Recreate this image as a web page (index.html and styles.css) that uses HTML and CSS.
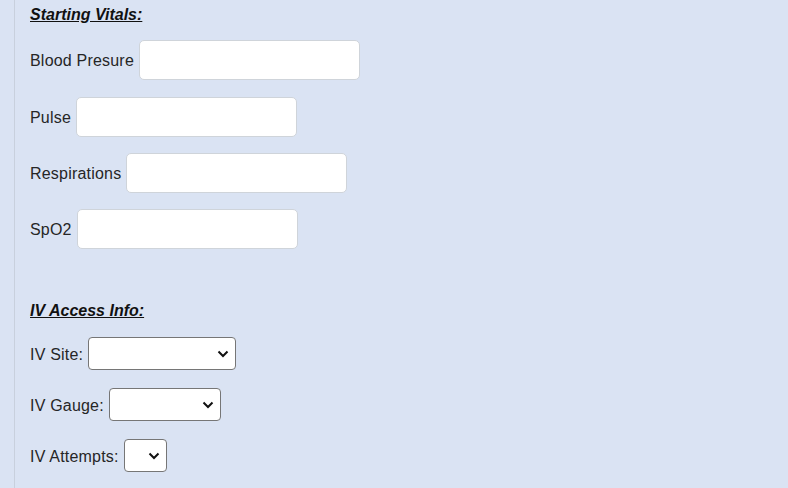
FILE: index.html
```html
<!DOCTYPE html>
<html>
    <head>
        <meta charset="UTF-8">
        <title>Run Sheet</title>
        <link rel="stylesheet" href="styles.css">
    </head>
    <body>
        <div class="sheet">
            <h3 class="sectionHead">Starting Vitals:</h3>
            <div class="vitals">
                <div class="fieldRow">
                    <label for="bp">Blood Presure</label>
                    <input id="bp" type="text">
                </div>
                <div class="fieldRow">
                    <label for="pulse">Pulse</label>
                    <input id="pulse" type="text">
                </div>
                <div class="fieldRow">
                    <label for="resp">Respirations</label>
                    <input id="resp" type="text">
                </div>
                <div class="fieldRow">
                    <label for="spo2">SpO2</label>
                    <input id="spo2" type="text">
                </div>
            </div>

            <h3 class="sectionHead ivHead">IV Access Info:</h3>
            <div class="ivInfo">
                <div class="pickRow">
                    <label for="ivSite">IV Site:</label>
                    <span class="pick">
                        <select id="ivSite" class="site"><option></option></select>
                        <svg class="chev" viewBox="0 0 12 8"><path d="M1.5 1.5 6 6 10.5 1.5"/></svg>
                    </span>
                </div>
                <div class="pickRow">
                    <label for="ivGauge">IV Gauge:</label>
                    <span class="pick">
                        <select id="ivGauge" class="gauge"><option></option></select>
                        <svg class="chev" viewBox="0 0 12 8"><path d="M1.5 1.5 6 6 10.5 1.5"/></svg>
                    </span>
                </div>
                <div class="pickRow">
                    <label for="ivTries">IV Attempts:</label>
                    <span class="pick">
                        <select id="ivTries" class="tries"><option></option></select>
                        <svg class="chev" viewBox="0 0 12 8"><path d="M1.5 1.5 6 6 10.5 1.5"/></svg>
                    </span>
                </div>
            </div>
        </div>
    </body>
</html>
```

FILE: styles.css
```css
* {
    box-sizing: border-box; }

html, body {
    background: #dae3f3;
    color: #262626;
    margin: 0; padding: 0;
    height: 100%;
    font-family: 'Liberation Sans', Arial, sans-serif;
    font-size: 16px; }

.sheet {
    margin-left: 14px;
    padding-left: 15px;
    border-left: 1px solid #c8d0dd;
    min-height: 100%;
    overflow: hidden; }

.sectionHead {
    margin: 6px 0 0 0;
    font-size: 16px;
    font-weight: bold;
    font-style: italic;
    text-decoration: underline;
    color: #111; }
.ivHead { margin-top: 53px; }

.vitals { padding-top: 16px; }
.ivInfo { padding-top: 17px; }

label {
    letter-spacing: 0.2px;
    padding-top: 2px; }

.fieldRow, .pickRow {
    display: flex;
    align-items: center;
    gap: 5px; }
.fieldRow { height: 40px; margin-bottom: 16px; }
.fieldRow:first-child { margin-bottom: 17px; }
.pickRow { height: 33px; margin-bottom: 18px; }

input {
    width: 221px;
    height: 40px;
    border: 1px solid #cfd4da;
    border-radius: 5px;
    background: #fff;
    font-size: 16px;
    outline: none; }

/* select with its own chevron drawn on top */
.pick {
    position: relative;
    display: inline-block;
    height: 33px; }
select {
    appearance: none;
    -webkit-appearance: none;
    display: block;
    height: 33px;
    border: 1px solid #767676;
    border-radius: 4px;
    background: #fff;
    font-size: 16px;
    color: #111; }
select.site  { width: 148px; }
select.gauge { width: 112px; }
select.tries { width: 43px; }
.chev {
    position: absolute;
    right: 7px;
    top: 13px;
    width: 12px;
    height: 8px;
    pointer-events: none;
    fill: none;
    stroke: #111;
    stroke-width: 2; }
```
